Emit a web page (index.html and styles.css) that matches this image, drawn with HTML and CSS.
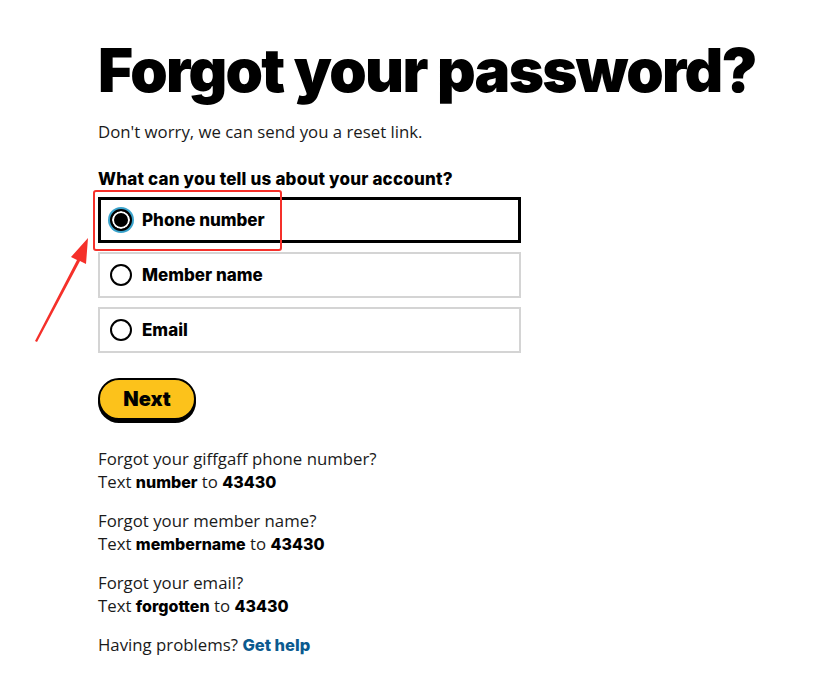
FILE: index.html
```html
<!DOCTYPE html>
<html>
<head>
    <meta charset="UTF-8">
    <title>Forgot your password?</title>
    <link rel="stylesheet" href="styles.css">
</head>
<body>
    <main class="page">
        <h1>Forgot your password?</h1>
        <p class="intro">Don't worry, we can send you a reset link.</p>

        <form class="reset-form">
            <fieldset class="choice">
                <div class="question">What can you tell us about your account?</div>
                <label class="option selected">
                    <input type="radio" name="method" value="phone" checked>
                    <span>Phone number</span>
                </label>
                <label class="option">
                    <input type="radio" name="method" value="member">
                    <span>Member name</span>
                </label>
                <label class="option">
                    <input type="radio" name="method" value="email">
                    <span>Email</span>
                </label>
            </fieldset>
            <button type="submit" class="next-button">Next</button>
        </form>

        <div class="help">
            <p>Forgot your giffgaff phone number?<br>Text <b>number</b> to <b>43430</b></p>
            <p>Forgot your member name?<br>Text <b>membername</b> to <b>43430</b></p>
            <p>Forgot your email?<br>Text <b>forgotten</b> to <b>43430</b></p>
            <p>Having problems? <a href="#">Get help</a></p>
        </div>
    </main>

    <!-- annotation drawn over the page -->
    <div class="mark-box"></div>
    <svg class="mark-arrow" width="60" height="110" viewBox="0 0 60 110">
        <path d="M2 103 L44 22 L38 19 L55 0 L53 26 L47 23 L4 104 Z" fill="#f5302a"/>
    </svg>
</body>
</html>
```

FILE: styles.css
```css
body {
    margin: 0;
    background-color: #fff;
    color: #1a1a1a;
    font-family: 'Open Sans', sans-serif;
    position: relative;
}

.page {
    padding: 40px 0 0 98px;
}

h1 {
    font-family: 'Inter', sans-serif;
    font-weight: 900;
    font-size: 60px;
    line-height: 60px;
    letter-spacing: -1.7px;
    margin: 0;
    color: #000;
}

.intro {
    font-size: 16.8px;
    line-height: 22px;
    margin: 21px 0 0;
}

.choice {
    border: none;
    padding: 0;
    margin: 25px 0 0;
}

.question {
    font-family: 'Inter', sans-serif;
    font-weight: 800;
    font-size: 17px;
    line-height: 22px;
    letter-spacing: 0.2px;
    margin-bottom: 7px;
    color: #000;
}

.option {
    box-sizing: border-box;
    display: flex;
    align-items: center;
    gap: 10px;
    width: 423px;
    height: 46px;
    padding: 0 10px;
    border: 2px solid #d4d4d4;
    margin-bottom: 9px;
    font-family: 'Inter', sans-serif;
    font-weight: 800;
    font-size: 17px;
    color: #000;
    cursor: pointer;
}

.option.selected {
    border: 3px solid #000;
    padding: 0 9px;
}

.option input {
    appearance: none;
    -webkit-appearance: none;
    box-sizing: border-box;
    width: 22px;
    height: 22px;
    margin: 0;
    border: 2px solid #000;
    border-radius: 50%;
    background-color: #fff;
}

.option input:checked {
    background-color: #000;
    box-shadow: inset 0 0 0 2px #fff, 0 0 0 2px #3aa3cc;
}

.next-button {
    display: block;
    margin-top: 16px;
    width: 98px;
    height: 42px;
    font-family: 'Inter', sans-serif;
    font-weight: 900;
    font-size: 20px;
    color: #000;
    background-color: #fcc21b;
    border: 2px solid #000;
    border-radius: 22px;
    box-shadow: 0 3px 0 #000;
    cursor: pointer;
}

.help {
    margin-top: 27px;
}

.help p {
    font-size: 16.8px;
    line-height: 23px;
    margin: 0 0 16px;
}

.help b {
    font-family: 'Inter', sans-serif;
    font-weight: 800;
    font-size: 16px;
    line-height: 1;
    color: #000;
}

.help a {
    font-family: 'Inter', sans-serif;
    font-weight: 800;
    font-size: 16.5px;
    line-height: 1;
    color: #0b5a8f;
    text-decoration: none;
}

.mark-box {
    position: absolute;
    left: 93px;
    top: 190px;
    width: 185px;
    height: 57px;
    border: 2px solid #f5302a;
    border-radius: 3px;
}

.mark-arrow {
    position: absolute;
    left: 33px;
    top: 238px;
}
```
